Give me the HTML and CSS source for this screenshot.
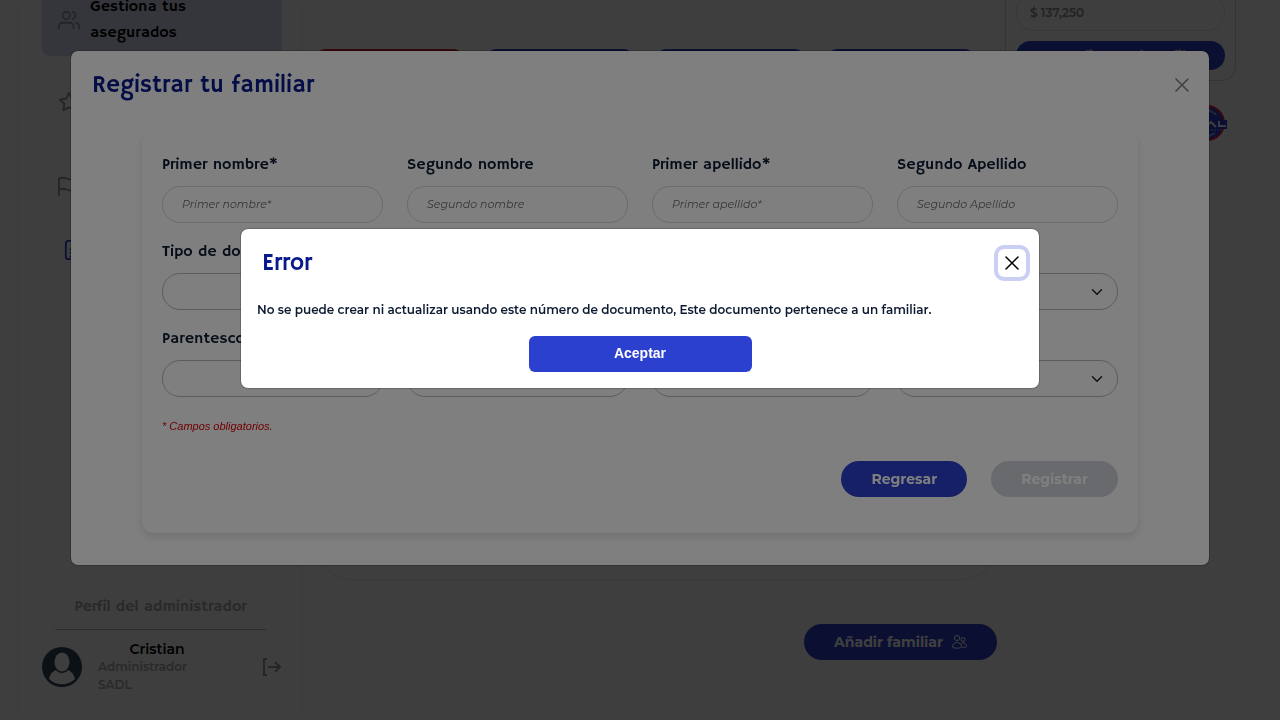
FILE: index.html
```html
<!DOCTYPE html>
<html lang="es">
<head>
<meta charset="utf-8">
<meta name="viewport" content="width=device-width, initial-scale=1">
<title>Registrar tu familiar</title>
<link rel="stylesheet" href="styles.css">
</head>
<body>
<div class="app">
  <aside class="sidebar">
    <nav class="nav">
      <a class="nav-item active" href="#">
        <svg class="nav-icon" viewBox="0 0 24 24"><path d="M17 21v-2a4 4 0 0 0-4-4H5a4 4 0 0 0-4 4v2"/><circle cx="9" cy="7" r="4"/><path d="M23 21v-2a4 4 0 0 0-3-3.87M16 3.13a4 4 0 0 1 0 7.75"/></svg>
        <span>Gestiona tus asegurados</span>
      </a>
      <a class="nav-item" href="#"><svg class="nav-icon" viewBox="0 0 24 24"><path d="M12 2l3.1 6.3 6.9 1-5 4.9 1.2 6.8-6.2-3.2L5.800 21 7 14.200 2 9.300l6.900-1z"/></svg></a>
      <a class="nav-item" href="#"><svg class="nav-icon" viewBox="0 0 24 24"><path d="M1 22V4s2-1 5-1 5 2 9 2 6-2 6-2v12s-2 2-6 2-6-2-9-2-5 1-5 1"/></svg></a>
      <a class="nav-item nested" href="#"><svg class="nav-icon" viewBox="0 0 24 24"><path d="M5 2h10l6 6v14H5a3 3 0 0 1-3-3V5a3 3 0 0 1 3-3zM7 11h11M7 15h11M7 19h8"/></svg></a>
    </nav>
    <section class="profile">
      <h2 class="profile-title">Perfil del administrador</h2>
      <div class="profile-row">
        <svg class="avatar" viewBox="0 0 40 40"><circle cx="20" cy="20" r="20" fill="#30445a"/><ellipse cx="20" cy="15" rx="7.500" ry="9.500" fill="#f8f8f8"/><path d="M7 32c1-5 4-8 7-9 3 4 9 4 12 0 3 1 6 4 7 9-7 7-19 7-26 0z" fill="#f8f8f8"/></svg>
        <div class="profile-text"><strong>Cristian</strong><span>Administrador</span><span>SADL</span></div>
        <button class="logout" type="button" aria-label="Salir"><svg viewBox="0 0 20 18"><path d="M5 1H2v16h3M6 9h12M13 4l5 5-5 5"/></svg></button>
      </div>
    </section>
  </aside>
  <main class="main">
    <section class="members">
      <div class="tabs"><i class="tab selected"></i><i class="tab"></i><i class="tab"></i><i class="tab"></i></div>
      <div class="panel"></div>
      <button class="pill add" type="button">Añadir familiar
        <svg viewBox="0 0 16 16"><circle cx="6" cy="4" r="2.600"/><circle cx="12" cy="5.500" r="2"/><path d="M1.500 13c0-3 2-4.500 4.500-4.500s4.500 1.500 4.500 4.500c0 1.500-9 1.500-9 0zM10 9.500c3-1.500 5.500.5 5.500 3 0 .8-2 1-4.500.8"/></svg>
      </button>
    </section>
    <section class="side">
      <div class="plan">
        <input class="amount" type="text" value="$ 137,250" aria-label="Monto">
        <button class="pill confirm" type="button">Configura el perfil</button>
      </div>
      <svg class="brand" viewBox="0 0 40 36"><circle cx="20" cy="18" r="17" fill="#2438c8" stroke="#e0203c" stroke-width="2"/><path d="M18 13h14v2h9v9H18z" fill="#2438c8"/><path d="M19 22l5-5 5 5M32 16v5h7" fill="none" stroke="#f4f4fc" stroke-width="2"/><path d="M21 25h13" stroke="#aab4f0" stroke-dasharray="2 1"/><path d="M22 5l8 5M22 31l6-3" stroke="#c4ccf4" stroke-width="2" stroke-dasharray="2 1"/></svg>
    </section>
  </main>
</div>

<div class="overlay">
  <section class="modal register" role="dialog" aria-labelledby="register-title">
    <header class="modal-header">
      <h1 id="register-title">Registrar tu familiar</h1>
      <button class="close faded" type="button" aria-label="Cerrar"><svg viewBox="0 0 12 12"><path d="M0 0l12 12M12 0L0 12"/></svg></button>
    </header>
    <form class="form">
      <div class="fields">
        <div class="field"><label for="f1">Primer nombre*</label><input id="f1" type="text" placeholder="Primer nombre*"></div>
        <div class="field"><label for="f2">Segundo nombre</label><input id="f2" type="text" placeholder="Segundo nombre"></div>
        <div class="field"><label for="f3">Primer apellido*</label><input id="f3" type="text" placeholder="Primer apellido*"></div>
        <div class="field"><label for="f4">Segundo Apellido</label><input id="f4" type="text" placeholder="Segundo Apellido"></div>
        <div class="field"><label for="f5">Tipo de documento*</label><select id="f5"></select></div>
        <div class="field"><label for="f6">Documento*</label><input id="f6" class="strong" type="text"></div>
        <div class="field"><label for="f7">Fecha*</label><input id="f7" class="strong" type="text"></div>
        <div class="field"><label for="f8">Género*</label><select id="f8"></select></div>
        <div class="field"><label for="f9">Parentesco*</label><select id="f9"></select></div>
        <div class="field"><label for="f10">País*</label><select id="f10"></select></div>
        <div class="field"><label for="f11">Estado*</label><select id="f11"></select></div>
        <div class="field"><label for="f12">Ciudad*</label><select id="f12"></select></div>
      </div>
      <p class="note">* Campos obligatorios.</p>
      <div class="actions">
        <button class="pill" type="button">Regresar</button>
        <button class="pill" type="submit" disabled>Registrar</button>
      </div>
    </form>
  </section>
</div>

<div class="overlay">
  <section class="modal error" role="alertdialog" aria-labelledby="error-title">
    <header class="modal-header">
      <h1 id="error-title">Error</h1>
      <button class="close focused" type="button" aria-label="Cerrar"><svg viewBox="0 0 12 12"><path d="M0 0l12 12M12 0L0 12"/></svg></button>
    </header>
    <div class="error-body">
      <p>No se puede crear ni actualizar usando este número de documento, Este documento pertenece a un familiar.</p>
      <button class="accept" type="button">Aceptar</button>
    </div>
  </section>
</div>
</body>
</html>
```
FILE: styles.css
```css
* { box-sizing: border-box; }

:root {
  --display: "Hammersmith One", Lato, sans-serif;
  --text: Montserrat, Inter, sans-serif;
  --blue: #2c40cf;
  --ink: #0b1a30;
}

body {
  margin: 0;
  height: 100vh;
  overflow: hidden;
  background: #f8f8f8;
  color: var(--ink);
  font-family: var(--text);
  font-size: 12px;
}

button, input, select { font: inherit; }
button { cursor: pointer; }
h1, h2, p { margin: 0; }

.app { display: flex; height: 100vh; overflow: hidden; }

.sidebar {
  display: flex;
  flex-direction: column;
  flex: none;
  width: 280px;
  margin-left: 20px;
  padding: 0 18px 26px 22px;
  background: #f9f9f9;
  box-shadow: 0 0 6px rgba(0, 0, 0, .03);
}

.nav { display: flex; flex-direction: column; margin-top: -18px; }

.nav-item {
  display: flex;
  align-items: center;
  gap: 10px;
  height: 84px;
  padding: 0 16px;
  color: #000;
  font: 400 16px/26px var(--display);
  text-decoration: none;
}

.nav-item.active { height: 74px; margin-bottom: 4px; padding-top: 2px; border-radius: 8px; background: #d6daee; }
.nav-item.nested { height: 44px; padding-left: 22px; }

.nav-icon {
  flex: none;
  width: 22px;
  height: 22px;
  fill: none;
  stroke: #90949c;
  stroke-width: 2;
  stroke-linecap: round;
  stroke-linejoin: round;
}

.nested .nav-icon { stroke: var(--blue); }

.profile { margin-top: auto; }

.profile-title {
  margin: 0 16px 10px 13px;
  padding-bottom: 12px;
  border-bottom: 1px solid #b0b0c0;
  color: #a4a6ac;
  font: 400 16px/20px var(--display);
  text-align: center;
}

.profile-row { display: flex; align-items: center; gap: 16px; }
.avatar { flex: none; width: 40px; height: 40px; }

.profile-text {
  display: grid;
  flex: 1;
  color: #a4a6ac;
  font-size: 12px;
  font-weight: 600;
  line-height: 18px;
}

.profile-text strong { padding-right: 30px; color: #000; font-size: 14px; font-weight: 600; text-align: center; }
.logout { width: 20px; height: 18px; padding: 0; border: 0; background: none; }
.logout svg { display: block; fill: none; stroke: #90949c; stroke-width: 2; }

.main {
  display: flex;
  flex: 1;
  gap: 8px;
  padding: 0 44px 0 16px;
}

.members { display: flex; flex: 1; flex-direction: column; }
.tabs { display: flex; gap: 26px; padding: 49px 24px 0 1px; }
.tab { flex: 1; height: 36px; border-radius: 8px; background: var(--blue); }
.tab.selected { background: #d8202c; }

.panel {
  height: 495px;
  border: 1px solid #e6e6e6;
  border-top: 0;
  border-radius: 0 0 36px 36px;
}

.pill {
  height: 36px;
  padding: 0 30px;
  border: 0;
  border-radius: 18px;
  background: var(--blue);
  color: #fff;
  font-size: 14px;
  font-weight: 700;
}

.pill:disabled { background: #d3d5da; color: #fff; }

.add {
  display: flex;
  align-items: center;
  align-self: flex-end;
  gap: 8px;
  margin-top: 44px;
}

.add svg { width: 16px; height: 16px; fill: none; stroke: #fff; }

.side {
  display: flex;
  flex: none;
  flex-direction: column;
  align-items: flex-end;
  width: 231px;
}

.plan {
  display: grid;
  gap: 10px;
  width: 100%;
  padding: 0 10px 10px;
  border: 1px solid #d0d2d6;
  border-top: 0;
  border-radius: 0 0 15px 15px;
}

.amount {
  width: 100%;
  min-width: 0;
  height: 37px;
  margin-top: -6px;
  padding: 0 13px;
  border: 1px solid #e0e0e0;
  border-radius: 18px;
  background: none;
  color: #8c8e94;
  font-size: 12px;
  font-weight: 600;
}

.confirm { height: 29px; padding: 0; border-radius: 15px; }
.brand { width: 40px; height: 36px; margin: 24px 9px 0 0; }

.overlay {
  position: fixed;
  inset: 0;
  padding: 50px 70px;
  background: rgba(0, 0, 0, .5);
}

.modal {
  width: 100%;
  max-width: 1140px;
  margin: 0 auto;
  border: 1px solid rgba(0, 0, 0, .18);
  border-radius: 8px;
  background: #fff;
  background-clip: padding-box;
}

.modal-header {
  display: flex;
  align-items: center;
  justify-content: space-between;
  padding: 16px 12px 16px 21px;
}

.modal-header h1 {
  color: #0a1a8c;
  font: 400 24px/36px var(--display);
}

.close {
  display: grid;
  place-items: center;
  width: 30px;
  height: 30px;
  padding: 0;
  border: 0;
  border-radius: 8px;
  background: none;
}

.close svg { width: 12px; height: 12px; overflow: visible; stroke: #000; stroke-width: 1.500; stroke-linecap: round; }
.faded { opacity: .5; }
.focused { box-shadow: 0 0 0 4px #cbcff3 inset; }

.form {
  margin: 13px 71px 32px;
  padding: 21px 20px 36px;
  border-radius: 12px;
  box-shadow: 0 4px 10px rgba(0, 0, 0, .12);
}

.fields { display: grid; grid-template-columns: repeat(4, minmax(0, 1fr)); gap: 17px 24px; }
.field { display: grid; gap: 9px; }
.field label { font: 400 16px/24px var(--display); white-space: nowrap; }

.field input, .field select {
  width: 100%;
  height: 37px;
  padding: 0 19px 2px;
  border: 1px solid #d6d6da;
  border-radius: 18px;
  background: transparent;
}

.field input::placeholder { color: #6c6e72; font-size: 11px; font-style: italic; opacity: 1; }

.field .strong, .field select { border-color: #b8babc; }

.field select {
  appearance: none;
  background: url("data:image/svg+xml,%3Csvg xmlns='http://www.w3.org/2000/svg' viewBox='0 0 16 16'%3E%3Cpath fill='none' stroke='%23212529' stroke-linecap='round' stroke-linejoin='round' stroke-width='2' d='m2 5 6 6 6-6'/%3E%3C/svg%3E") no-repeat right 14px center / 12px;
}

.note {
  margin-top: 20px;
  color: #e00000;
  font: italic 11px/18px "Liberation Sans", sans-serif;
}

.actions { display: flex; justify-content: flex-end; gap: 24px; margin-top: 26px; }

.error { max-width: 800px; margin-top: 178px; }
.error .modal-header { padding: 16px 9px 12px 21px; }
.error .close { width: 36px; height: 36px; border-radius: 10px; }
.error-body { display: grid; padding: 7px 16px 16px; }
.error-body p { font-size: 12px; font-weight: 600; line-height: 20px; }

.accept {
  justify-self: center;
  width: 223px;
  height: 36px;
  margin-top: 16px;
  padding: 0 0 2px;
  border: 0;
  border-radius: 6px;
  background: var(--blue);
  color: #fff;
  font: 700 14px "Liberation Sans", sans-serif;
}
```
